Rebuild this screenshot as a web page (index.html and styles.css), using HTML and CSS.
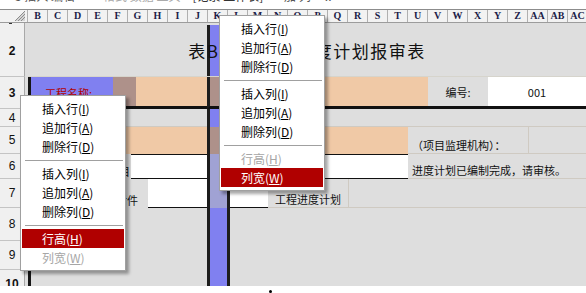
FILE: index.html
```html
<!DOCTYPE html>
<html lang="zh-CN">
<head>
    <meta charset="UTF-8">
    <title>进度计划报审表</title>
    <link rel="stylesheet" href="styles.css">
</head>
<body>
    <div class="toolbar">
        <span class="t1">3 插入 编辑</span>
        <span class="t2">格式 数据 工具</span>
        <span class="t3">[记录 工作表]</span>
        <span class="t4">- 加 列</span>
        <span class="t5">..</span>
    </div>

    <div class="colhead">
        <div class="corner">
            <svg width="27" height="12" viewBox="0 0 27 12">
                <polygon points="25,1 25,11 15,11" fill="#d4d4d4"/>
                <path d="M25 1 L15 11 M25 4 L18 11 M25 7 L21 11" stroke="#8c8c8c" stroke-width="1"/>
            </svg>
        </div>
        <div class="col">B</div><div class="col">C</div><div class="col">D</div><div class="col">E</div>
        <div class="col">F</div><div class="col">G</div><div class="col">H</div><div class="col">I</div>
        <div class="col">J</div><div class="col">K</div><div class="col">L</div><div class="col">M</div>
        <div class="col">N</div><div class="col">O</div><div class="col">P</div><div class="col">Q</div>
        <div class="col">R</div><div class="col">S</div><div class="col">T</div><div class="col">U</div>
        <div class="col">V</div><div class="col">W</div><div class="col">X</div><div class="col">Y</div>
        <div class="col">Z</div><div class="col">AA</div><div class="col">AB</div><div class="col">AC</div>
    </div>

    <div class="sheet">
        <div class="row r1">
            <div class="rh"><span class="tick"></span></div>
            <div class="cells"></div>
        </div>

        <div class="row r2">
            <div class="rh bold">2</div>
            <div class="cells">
                <div class="c title">表B.0.6 施工进度计划报审表</div>
            </div>
        </div>

        <div class="row r3">
            <div class="rh bold">3</div>
            <div class="cells">
                <div class="c edge blue label-red" style="width:85px">工程名称:</div>
                <div class="c mauve" style="width:23px"></div>
                <div class="c orange" style="width:71px"></div>
                <div class="c k mauve"></div>
                <div class="c orange" style="width:198px"></div>
                <div class="c grey center" style="width:60px">编号:</div>
                <div class="c white center" style="width:98px">001</div>
            </div>
        </div>

        <div class="row r4">
            <div class="rh">4</div>
            <div class="cells">
                <div class="c edge grey line-b" style="width:179px"></div>
                <div class="c k"></div>
                <div class="c grey line-b" style="width:356px"></div>
            </div>
        </div>

        <div class="row r5">
            <div class="rh">5</div>
            <div class="cells">
                <div class="c edge orange" style="width:179px"></div>
                <div class="c k mauve"></div>
                <div class="c orange" style="width:178px"></div>
                <div class="c grey low line-b" style="width:120px">（项目监理机构）：</div>
                <div class="c grey line-l line-b" style="width:58px"></div>
            </div>
        </div>

        <div class="row r6">
            <div class="rh">6</div>
            <div class="cells">
                <div class="c edge grey right low" style="width:103px">承包单位项目</div>
                <div class="c white boxed" style="width:76px"></div>
                <div class="c k lilac"></div>
                <div class="c white boxed" style="width:178px"></div>
                <div class="c grey low line-b" style="width:178px">进度计划已编制完成，请审核。</div>
            </div>
        </div>

        <div class="row r7">
            <div class="rh">7</div>
            <div class="cells">
                <div class="c edge grey right low" style="width:120px">附件</div>
                <div class="c white under" style="width:59px"></div>
                <div class="c k lilac"></div>
                <div class="c white under" style="width:38px"></div>
                <div class="c grey low plan line-b" style="width:80px">工程进度计划</div>
                <div class="c grey line-l line-b" style="width:238px"></div>
            </div>
        </div>

        <div class="row r8">
            <div class="rh">8</div>
            <div class="cells">
                <div class="c edge grey" style="width:179px"></div>
                <div class="c k"></div>
                <div class="c grey" style="width:356px"></div>
            </div>
        </div>

        <div class="row r9">
            <div class="rh">9</div>
            <div class="cells">
                <div class="c edge grey" style="width:179px"></div>
                <div class="c k"></div>
                <div class="c grey" style="width:356px"></div>
            </div>
        </div>

        <div class="row r10">
            <div class="rh bold">10</div>
            <div class="cells">
                <div class="c edge grey" style="width:179px"></div>
                <div class="c k"></div>
                <div class="c grey" style="width:356px"></div>
            </div>
        </div>
    </div>

    <div class="footer"><span class="dot"></span></div>

    <!-- 行头右键菜单 -->
    <div class="menu menu-left">
        <div class="item">插入行(<u>I</u>)</div>
        <div class="item">追加行(<u>A</u>)</div>
        <div class="item">删除行(<u>D</u>)</div>
        <div class="sep"></div>
        <div class="item">插入列(<u>I</u>)</div>
        <div class="item">追加列(<u>A</u>)</div>
        <div class="item">删除列(<u>D</u>)</div>
        <div class="sep"></div>
        <div class="item on">行高(<u>H</u>)</div>
        <div class="item off">列宽(<u>W</u>)</div>
    </div>

    <!-- 列头右键菜单 -->
    <div class="menu menu-right">
        <div class="item">插入行(<u>I</u>)</div>
        <div class="item">追加行(<u>A</u>)</div>
        <div class="item">删除行(<u>D</u>)</div>
        <div class="sep"></div>
        <div class="item">插入列(<u>I</u>)</div>
        <div class="item">追加列(<u>A</u>)</div>
        <div class="item">删除列(<u>D</u>)</div>
        <div class="sep"></div>
        <div class="item off">行高(<u>H</u>)</div>
        <div class="item on">列宽(<u>W</u>)</div>
    </div>
</body>
</html>
```

FILE: styles.css
```css
body {
    margin: 0;
    width: 586px;
    height: 293px;
    overflow: hidden;
    position: relative;
    background-color: #ffffff;
    font-family: "Noto Sans CJK SC", "Liberation Sans", sans-serif;
}

/* top toolbar, mostly cut off */
.toolbar {
    height: 9px;
    border-bottom: 1px solid #8c8c8c;
    overflow: hidden;
    display: flex;
    align-items: flex-start;
    font-size: 12px;
    line-height: 12px;
    color: #555;
    white-space: nowrap;
}
.toolbar span {
    margin-top: -10px;
}
.toolbar .t1 { margin-left: 15px; }
.toolbar .t2 { margin-left: 28px; color: #aaa; }
.toolbar .t3 { margin-left: 12px; color: #333; }
.toolbar .t4 { margin-left: 14px; }
.toolbar .t5 { margin-left: 14px; }

/* column header */
.colhead {
    display: flex;
    height: 13px;
    box-sizing: border-box;
    background-color: #f2f2f2;
    border-bottom: 1px solid #9c9c9c;
}
.corner {
    width: 28px;
    flex: none;
    box-sizing: border-box;
    border-right: 1px solid #b0b0b0;
}
.corner svg {
    display: block;
}
.col {
    width: 20px;
    flex: none;
    box-sizing: border-box;
    border-right: 1px solid #b0b0b0;
    text-align: center;
    font: bold 10px "Liberation Serif", serif;
    line-height: 12px;
    color: #1c1c48;
}

/* sheet */
.sheet {
    height: 263px;
    overflow: hidden;
}
.row {
    display: flex;
}
.r1 { height: 2px; }
.r2 { height: 52px; }
.r3 { height: 32px; }
.r4 { height: 18px; }
.r5 { height: 27px; }
.r6 { height: 25px; }
.r7 { height: 29px; }
.r8 { height: 33px; }
.r9 { height: 29px; }
.r10 { height: 29px; }

.rh {
    width: 25px;
    flex: none;
    box-sizing: border-box;
    background-color: #f0f0f0;
    border-right: 1px solid #a8a8a8;
    border-bottom: 1px solid #c4c4c4;
    display: flex;
    align-items: center;
    justify-content: center;
    font: 12px "Liberation Sans", sans-serif;
    color: #111;
}
.rh.bold {
    font-weight: bold;
}
.r1 .rh {
    border-bottom: none;
    align-items: flex-start;
}
.tick {
    width: 3px;
    height: 1px;
    background-color: #333;
    margin-right: 4px;
}

.cells {
    flex: 1;
    display: flex;
    padding-left: 3px;
    background-color: #dedede;
}
.c {
    flex: none;
    box-sizing: border-box;
    display: flex;
    align-items: center;
    font-size: 11px;
    line-height: 13px;
    color: #111;
    white-space: nowrap;
    overflow: hidden;
}
.edge {
    border-left: 3px solid #161616;
}
.k {
    width: 23px;
    border-left: 3px solid #1d1d1d;
    border-right: 3px solid #1d1d1d;
    background-color: #8080f0;
}

.grey { background-color: #dedede; }
.orange { background-color: #f0c9a6; }
.white { background-color: #ffffff; }
.blue { background-color: #8080f0; }
.mauve { background-color: #ae918a; }
.k.mauve { background-color: #ae918a; }
.k.lilac { background-color: #a0a2d4; }

.center { justify-content: center; }
.right { justify-content: flex-end; padding-right: 1px; }
.low { align-items: flex-end; padding-left: 4px; padding-bottom: 1px; }
.right.low { padding-right: 10px; }
.r6 .right.low { padding-right: 1px; }
.plan { padding-left: 7px; }
.line-b { border-bottom: 1px solid #cfcac2; }
.line-l { border-left: 1px solid #cfcac2; }
.boxed {
    border-top: 1px solid #111;
    border-bottom: 1px solid #111;
}
.under {
    border-bottom: 1px solid #111;
}

.title {
    width: 558px;
    justify-content: center;
    font-size: 17px;
    letter-spacing: 1.5px;
    border-bottom: 1px solid #d6d4cc;
    background: linear-gradient(to right,
        #dedede 179px,
        #1d1d1d 179px 182px,
        #8080f0 182px 199px,
        #1d1d1d 199px 202px,
        #dedede 202px);
}

.r3 .c {
    border-bottom: 3px solid #111;
}
.r3 .center {
    padding-top: 2px;
}
.label-red {
    padding-left: 14px;
    padding-top: 4px;
    color: #b00000;
}

.footer {
    height: 7px;
}
.dot {
    display: block;
    width: 3px;
    height: 3px;
    border-radius: 50%;
    background-color: #000;
    margin: 4px 0 0 269px;
}

/* context menus */
.menu {
    position: absolute;
    width: 106px;
    box-sizing: border-box;
    background-color: #ffffff;
    border: 1px solid #a0a0a0;
    padding: 3px 1px;
    box-shadow: 3px 3px 3px rgba(0, 0, 0, 0.35);
    font-size: 12px;
}
.menu-left {
    left: 20px;
    top: 95px;
}
.menu-right {
    left: 219px;
    top: 15px;
}
.item {
    height: 19px;
    line-height: 19px;
    padding-left: 20px;
    color: #000;
    white-space: nowrap;
}
.item.off {
    color: #a6a6a6;
}
.item.on {
    background-color: #b00000;
    color: #ffffff;
}
.sep {
    height: 1px;
    background-color: #a0a0a0;
    margin: 4px 1px 3px 3px;
}
```
